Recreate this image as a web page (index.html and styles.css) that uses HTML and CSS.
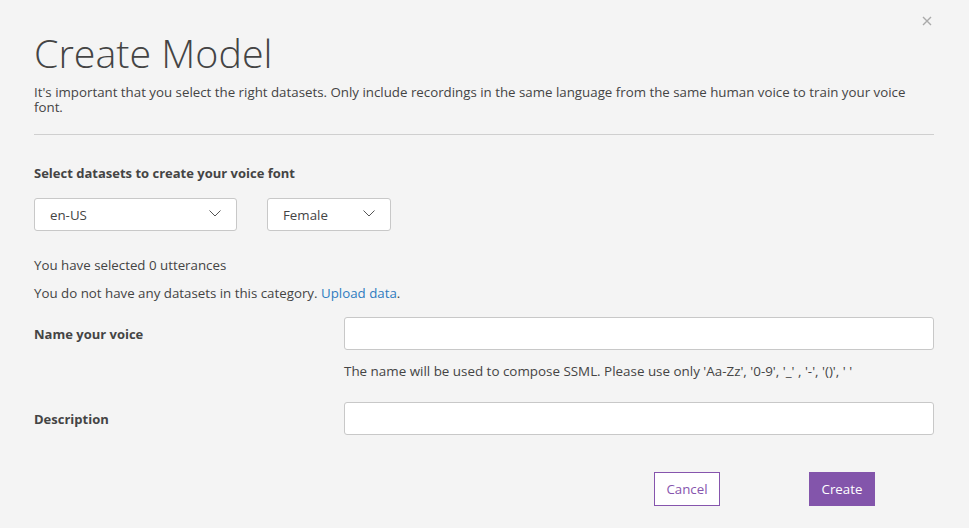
FILE: index.html
```html
<!DOCTYPE html>
<html>
<head>
<meta charset="utf-8">
<link rel="stylesheet" href="styles.css">
</head>
<body>
<div class="dialog">
  <button class="close" aria-label="Close">
    <svg width="10" height="10" viewBox="0 0 10 10"><path d="M1 1L9 9M9 1L1 9" stroke="#aaa" stroke-width="1.4"/></svg>
  </button>
  <h1 class="title">Create Model</h1>
  <p class="intro">It's important that you select the right datasets. Only include recordings in the same language from the same human voice to train your voice font.</p>
  <hr class="divider">
  <h2 class="section-label">Select datasets to create your voice font</h2>
  <div class="selects">
    <div class="select select-lang"><span>en-US</span><svg class="chev" width="12" height="7" viewBox="0 0 12 7"><path d="M0.5 0.5L6 6L11.5 0.5" fill="none" stroke="#555" stroke-width="1"/></svg></div>
    <div class="select select-gender"><span>Female</span><svg class="chev" width="12" height="7" viewBox="0 0 12 7"><path d="M0.5 0.5L6 6L11.5 0.5" fill="none" stroke="#555" stroke-width="1"/></svg></div>
  </div>
  <p class="info first">You have selected 0 utterances</p>
  <p class="info">You do not have any datasets in this category. <a href="#" class="link">Upload data</a>.</p>
  <div class="field">
    <label class="field-label">Name your voice</label>
    <div class="field-control">
      <div class="input"></div>
      <p class="hint">The name will be used to compose SSML. Please use only 'Aa-Zz', '0-9', '_' , '-', '()', ' '</p>
    </div>
  </div>
  <div class="field field-desc">
    <label class="field-label">Description</label>
    <div class="field-control">
      <div class="input"></div>
    </div>
  </div>
  <div class="actions">
    <button class="btn btn-cancel">Cancel</button>
    <button class="btn btn-create">Create</button>
  </div>
</div>
</body>
</html>
```
FILE: styles.css
```css
* { box-sizing: border-box; }
html, body { margin: 0; padding: 0; }
body {
  background: #f4f4f4;
  font-family: "Open Sans", "Noto Sans", sans-serif;
  color: #444;
  width: 969px;
  height: 528px;
  overflow: hidden;
}
.dialog {
  position: relative;
  padding: 28px 35px 0 34px;
}
.close {
  position: absolute;
  top: 16px;
  right: 37px;
  border: 0;
  background: none;
  padding: 0;
  width: 10px;
  height: 10px;
  display: flex;
}
.title {
  margin: 0;
  font-size: 39.4px;
  font-weight: 300;
  line-height: 50px;
  color: #444;
}
.intro {
  margin: 7px 0 0;
  max-width: 880px;
  font-size: 13.3px;
  line-height: 15px;
  color: #444;
}
.divider {
  margin: 19px 0 0;
  border: 0;
  border-top: 1px solid #cfcfcf;
}
.section-label {
  margin: 29px 0 0;
  font-size: 13px;
  font-weight: 700;
  line-height: 18px;
  color: #444;
}
.selects {
  display: flex;
  gap: 30px;
  margin-top: 16px;
}
.select {
  height: 33px;
  background: #fff;
  border: 1px solid #c8c8c8;
  border-radius: 3px;
  display: flex;
  align-items: center;
  justify-content: space-between;
  padding: 0 15px 0 15px;
  font-size: 13.3px;
  color: #444;
}
.select-lang { width: 203px; }
.select-gender { width: 124px; }
.chev { margin-top: -3px; }
.info {
  margin: 0;
  font-size: 13.3px;
  line-height: 18px;
  color: #444;
}
.info.first { margin-top: 25px; }
.info + .info { margin-top: 10px; }
.link { color: #2f7cc0; text-decoration: none; }
.field {
  display: flex;
  margin-top: 15px;
}
.field-desc { margin-top: 22px; }
.field-label {
  width: 310px;
  padding-top: 1px;
  font-size: 13px;
  font-weight: 700;
  line-height: 33px;
  color: #444;
}
.field-control { flex: 1; }
.input {
  height: 33px;
  background: #fff;
  border: 1px solid #c8c8c8;
  border-radius: 3px;
}
.hint {
  margin: 12px 0 0;
  font-size: 13.4px;
  line-height: 18px;
  color: #444;
}
.actions {
  display: flex;
  justify-content: flex-end;
  gap: 89px;
  margin-top: 36px;
  padding-right: 59px;
}
.btn {
  height: 34px;
  width: 66px;
  font-family: "Open Sans", "Noto Sans", sans-serif;
  font-size: 13.3px;
  padding: 0;
  cursor: pointer;
}
.btn-cancel {
  background: #fff;
  border: 1px solid #8655ad;
  color: #8655ad;
}
.btn-create {
  background: #8355ab;
  border: 1px solid #8355ab;
  color: #fff;
}
```
